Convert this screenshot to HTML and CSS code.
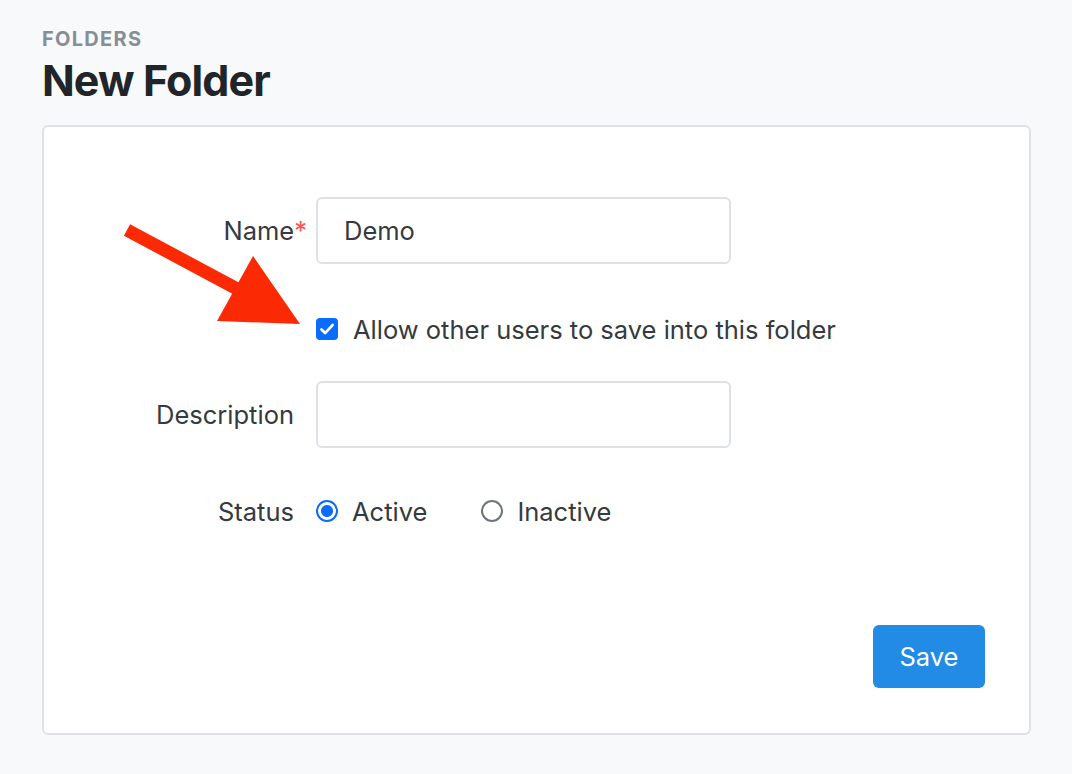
FILE: index.html
```html
<!DOCTYPE html>
<html lang="en">
<head>
  <meta charset="UTF-8" />
  <title>New Folder</title>
  <link rel="stylesheet" href="styles.css">
</head>
<body>
  <div class="page">
    <div class="crumb">FOLDERS</div>
    <h1 class="title">New Folder</h1>
    <div class="card">
      <form class="folder-form">
        <div class="row row-name">
          <label class="label" for="name">Name<span class="req">*</span></label>
          <input class="input" id="name" type="text" value="Demo">
        </div>
        <div class="row row-check">
          <div class="label"></div>
          <label class="check">
            <span class="box">
              <svg width="22" height="22" viewBox="0 0 22 22"><path d="M5.5 11.5l3.6 3.6 7.4-8" fill="none" stroke="#fff" stroke-width="2.8" stroke-linecap="round" stroke-linejoin="round"/></svg>
            </span>
            Allow other users to save into this folder
          </label>
        </div>
        <div class="row row-desc">
          <label class="label" for="desc">Description</label>
          <input class="input" id="desc" type="text" value="">
        </div>
        <div class="row row-status">
          <div class="label">Status</div>
          <div class="radios">
            <label class="radio"><span class="dot on"></span>Active</label>
            <label class="radio"><span class="dot"></span>Inactive</label>
          </div>
        </div>
        <div class="actions">
          <button class="save" type="button">Save</button>
        </div>
      </form>
      <svg class="arrow" width="200" height="120" viewBox="0 0 200 120">
        <line x1="8" y1="13" x2="122" y2="74" stroke="#fb2a05" stroke-width="13"/>
        <polygon points="134,39 98,104 181,107" fill="#fb2a05"/>
      </svg>
    </div>
  </div>
</body>
</html>
```

FILE: styles.css
```css
* { box-sizing: border-box; }
body { margin: 0; background: #f8f9fa; font-family: Inter, "Noto Sans", sans-serif; color: #343a40; }
.page { padding: 27px 41px 38px 42px; }
.crumb { font-size: 20px; font-weight: 700; color: #868e96; letter-spacing: 1.3px; line-height: 24px; }
.title { margin: 4px 0 20px; font-size: 43px; font-weight: 700; color: #212529; line-height: 50px; letter-spacing: -0.9px; }
.card { position: relative; background: #fff; border: 2px solid #dee2e6; border-radius: 6px; padding: 70px 44px 44px 0; height: 610px; }
.row { display: flex; align-items: center; gap: 22px; }
.label { width: 250px; flex: none; text-align: right; font-size: 25.5px; color: #343a40; }
.req { color: #fa5252; margin-right: -13px; }
.input { width: 415px; height: 67px; border: 2px solid #dee2e6; border-radius: 6px; padding: 0 26px; font: inherit; font-size: 25.5px; color: #343a40; background: #fff; }
.row-name { margin-bottom: 43px; }
.row-check { height: 44px; margin-bottom: 30px; }
.row-desc { margin-bottom: 41px; }
.row-status { height: 44px; }
.check { display: flex; align-items: center; gap: 15px; font-size: 25.5px; }
.box { width: 22px; height: 22px; border-radius: 4px; background: #0a6cfc; display: block; }
.box svg { display: block; }
.radios { display: flex; align-items: center; gap: 54px; font-size: 25.5px; }
.radio { display: flex; align-items: center; gap: 14px; }
.dot { width: 22px; height: 22px; border-radius: 50%; border: 2px solid #6c757d; display: block; }
.dot.on { border: 2px solid #0a6cfc; background: radial-gradient(circle, #0a6cfc 0 5.5px, #fff 6.5px); }
.actions { display: flex; justify-content: flex-end; margin-top: 92px; }
.save { width: 112px; height: 63px; background: #228be6; color: #fff; border: none; border-radius: 6px; font: inherit; font-size: 25.5px; }
.arrow { position: absolute; left: 75px; top: 90px; }
```
